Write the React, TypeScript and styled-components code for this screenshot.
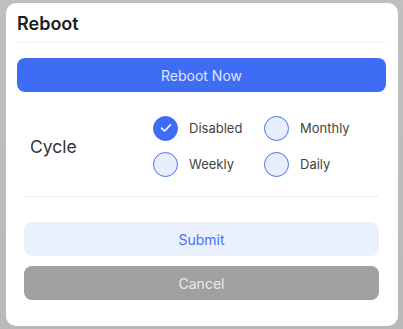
import * as React from 'react';
import styled, { createGlobalStyle } from 'styled-components';

const GlobalStyle = createGlobalStyle`
    html, body {
        margin: 0;
        padding: 0;
        background: #bdbdbd;
        font-family: Inter, "Noto Sans", "Liberation Sans", sans-serif;
    }
`;

const Page = styled.div`
    width: 403px;
    height: 329px;
    padding: 3px 5px 3px 6px;
    box-sizing: border-box;
    background: linear-gradient(#bfbfbf, #b9b9b9);
`;

const Modal = styled.div`
    height: 323px;
    background: #ffffff;
    border-radius: 10px;
    padding: 0 12px 0 11px;
    box-sizing: border-box;
    display: flex;
    flex-direction: column;
`;

const Header = styled.div`
    height: 40px;
    display: flex;
    align-items: center;
    border-bottom: 1px solid #f1f1f1;
    box-sizing: border-box;
`;

const Title = styled.div`
    font-size: 18px;
    font-weight: 600;
    color: #1e1e1e;
    padding-top: 2px;
`;

const Button = styled.button<{ $variant: 'primary' | 'light' | 'grey' }>`
    height: 34px;
    width: 100%;
    border: none;
    border-radius: 8px;
    font-family: inherit;
    font-size: 14px;
    cursor: pointer;
    background: ${p => p.$variant === 'primary' ? '#3e6cf5' : p.$variant === 'light' ? '#ebf0fd' : '#a0a0a0'};
    color: ${p => p.$variant === 'primary' ? '#dfe6fd' : p.$variant === 'light' ? '#4a71f2' : '#ebebeb'};
`;

const TopButton = styled(Button)`
    margin-top: 15px;
`;

const Section = styled.div`
    margin: 0 7px;
    padding: 24px 0 20px 6px;
    display: flex;
    align-items: center;
    border-bottom: 1px solid #eeeeee;
`;

const Label = styled.div`
    width: 123px;
    font-size: 17.5px;
    color: #333333;
`;

const Options = styled.div`
    display: grid;
    grid-template-columns: 111px 111px;
    row-gap: 12px;
`;

const Option = styled.label`
    display: flex;
    align-items: center;
    gap: 11px;
    font-size: 13px;
    color: #444444;
    height: 24px;
`;

const Circle = styled.span<{ $checked?: boolean }>`
    width: 25px;
    height: 25px;
    border-radius: 50%;
    box-sizing: border-box;
    border: 1.6px solid ${p => p.$checked ? '#3e6cf5' : '#4670f4'};
    background: ${p => p.$checked ? '#3e6cf5' : '#e9eefc'};
    display: flex;
    align-items: center;
    justify-content: center;
`;

const Footer = styled.div`
    margin: 25px 7px 0;
    display: flex;
    flex-direction: column;
    gap: 10px;
`;

const options = [
    { name: 'Disabled', checked: true },
    { name: 'Monthly', checked: false },
    { name: 'Weekly', checked: false },
    { name: 'Daily', checked: false },
];

export default function App() {
    return (
        <>
            <GlobalStyle />
            <Page>
                <Modal>
                    <Header>
                        <Title>Reboot</Title>
                    </Header>
                    <TopButton $variant="primary">Reboot Now</TopButton>
                    <Section>
                        <Label>Cycle</Label>
                        <Options>
                            {options.map(o => (
                                <Option key={o.name}>
                                    <Circle $checked={o.checked}>
                                        {o.checked && (
                                            <svg width="12" height="10" viewBox="0 0 12 10">
                                                <path d="M1.5 5.2 L4.6 8 L10.5 1.8" fill="none" stroke="#ffffff" strokeWidth="1.6" strokeLinecap="round" strokeLinejoin="round" />
                                            </svg>
                                        )}
                                    </Circle>
                                    {o.name}
                                </Option>
                            ))}
                        </Options>
                    </Section>
                    <Footer>
                        <Button $variant="light">Submit</Button>
                        <Button $variant="grey">Cancel</Button>
                    </Footer>
                </Modal>
            </Page>
        </>
    );
}
